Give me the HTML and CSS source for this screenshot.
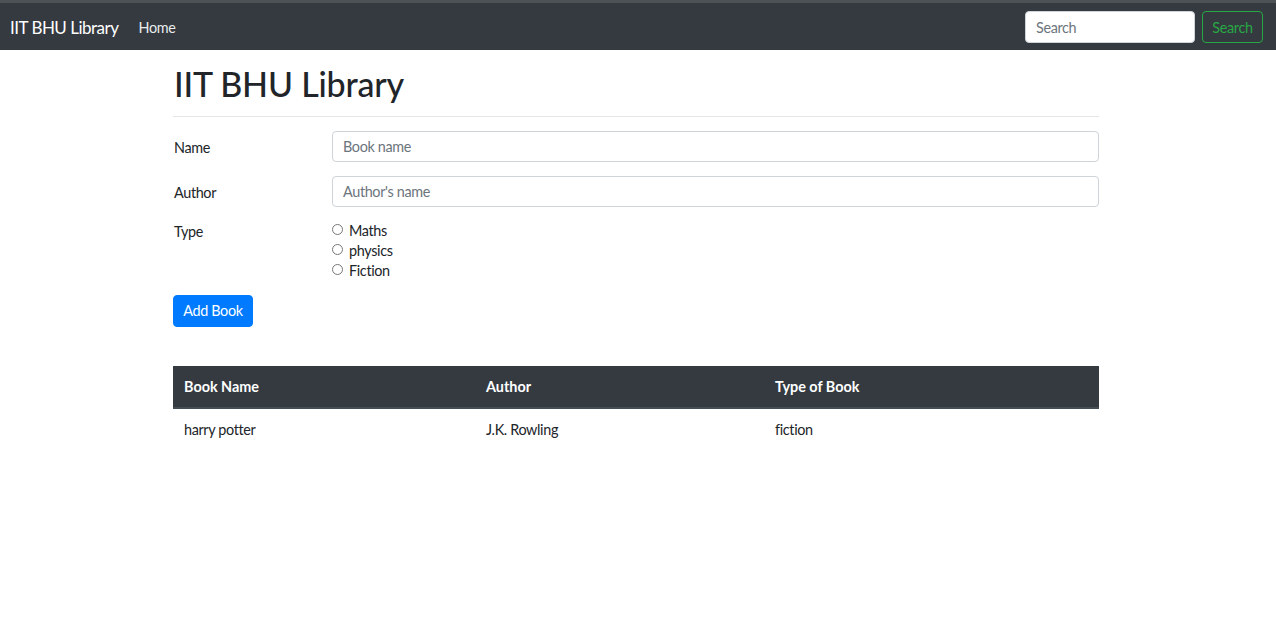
FILE: index.html
```html
<!DOCTYPE html>
<html>
<head>
<meta charset="utf-8">
<title>IIT BHU Library</title>
<link rel="stylesheet" href="styles.css">
</head>
<body>
<nav class="navbar">
  <div class="nav-left">
    <a class="brand" href="#">IIT BHU Library</a>
    <a class="nav-link" href="#">Home</a>
  </div>
  <form class="nav-search">
    <input class="search-input" type="search" placeholder="Search">
    <button class="btn-outline-success" type="button">Search</button>
  </form>
</nav>
<main class="container">
  <h1 class="title">IIT BHU Library</h1>
  <hr class="rule">
  <form class="book-form">
    <div class="form-row">
      <label class="form-label">Name</label>
      <input class="form-control" type="text" placeholder="Book name">
    </div>
    <div class="form-row">
      <label class="form-label">Author</label>
      <input class="form-control" type="text" placeholder="Author's name">
    </div>
    <div class="form-row">
      <label class="form-label type-label">Type</label>
      <div class="radios">
        <label class="radio"><input type="radio" name="type"><span>Maths</span></label>
        <label class="radio"><input type="radio" name="type"><span>physics</span></label>
        <label class="radio"><input type="radio" name="type"><span>Fiction</span></label>
      </div>
    </div>
    <button class="btn-primary" type="button">Add Book</button>
  </form>
  <table class="books">
    <thead>
      <tr><th class="c1">Book Name</th><th class="c2">Author</th><th class="c3">Type of Book</th></tr>
    </thead>
    <tbody>
      <tr><td>harry potter</td><td>J.K. Rowling</td><td>fiction</td></tr>
    </tbody>
  </table>
</main>
</body>
</html>
```
FILE: styles.css
```css
* { box-sizing: border-box; }
body {
  margin: 0;
  font-family: Lato, "Noto Sans", sans-serif;
  font-size: 14.4px;
  letter-spacing: -0.35px;
  color: #212529;
  background: #fff;
}
.navbar {
  height: 50px;
  background: #343a40;
  border-top: 3px solid #4d5257;
  display: flex;
  align-items: center;
  justify-content: space-between;
  padding: 0 13px 0 10px;
}
.nav-left { display: flex; align-items: center; gap: 20px; }
.brand {
  color: #fff;
  font-size: 17px;
  letter-spacing: -0.5px;
  text-decoration: none;
  margin-top: 1px;
}
.nav-link {
  color: rgba(255,255,255,.92);
  font-size: 14.4px;
  text-decoration: none;
  margin-top: 1px;
}
.nav-search { display: flex; align-items: center; gap: 7px; margin-top: 1px; }
.search-input {
  width: 170px;
  height: 32px;
  border: 1px solid #ced4da;
  border-radius: 4px;
  padding: 0 10px;
  font-family: inherit;
  font-size: 14.4px;
  letter-spacing: inherit;
  color: #495057;
  outline: none;
}
.search-input::placeholder { color: #6c757d; }
.btn-outline-success {
  height: 32px;
  width: 61px;
  background: transparent;
  border: 1px solid #28a745;
  border-radius: 4px;
  color: #28a745;
  font-family: inherit;
  font-size: 14.4px;
  letter-spacing: inherit;
  padding: 0;
}
.container {
  width: 926px;
  margin: 0 auto 0 173px;
}
.title {
  font-size: 34px;
  font-weight: 500;
  letter-spacing: -0.2px;
  line-height: 1.2;
  margin: 14px 0 0 1px;
}
.rule {
  border: 0;
  border-top: 1px solid rgba(0,0,0,.1);
  margin: 11px 0 14px 0;
}
.form-row {
  display: flex;
  align-items: flex-start;
  margin-bottom: 14px;
}
.form-label {
  width: 159px;
  flex: none;
  padding-top: 6px;
  padding-left: 1px;
  line-height: 1.5;
}
.type-label { padding-top: 0; }
.form-control {
  flex: 1;
  height: 31px;
  border: 1px solid #ced4da;
  border-radius: 4px;
  padding: 1px 10px 0;
  font-family: inherit;
  font-size: 14.4px;
  letter-spacing: inherit;
  color: #495057;
  outline: none;
}
.form-control::placeholder { color: #6c757d; }
.radios { display: flex; flex-direction: column; }
.radio {
  display: flex;
  align-items: center;
  height: 20px;
  gap: 6px;
}
.radio input {
  margin: 0;
  width: 11px;
  height: 11px;
  position: relative;
  top: -1px;
}
.btn-primary {
  height: 32px;
  width: 80px;
  background: #007bff;
  border: 1px solid #007bff;
  border-radius: 4px;
  color: #fff;
  font-family: inherit;
  font-size: 14.4px;
  letter-spacing: inherit;
  padding: 0;
}
.books {
  width: 926px;
  border-collapse: collapse;
  margin-top: 39px;
}
.books th {
  background: #343a40;
  color: #fff;
  font-weight: 700;
  letter-spacing: 0;
  text-align: left;
  height: 42px;
  padding: 0 11px;
  border-bottom: 2px solid #454d55;
}
.books td {
  padding: 0 11px;
  height: 43px;
}
.c1 { width: 302px; }
.c2 { width: 289px; }
.c3 { width: 335px; }
```
